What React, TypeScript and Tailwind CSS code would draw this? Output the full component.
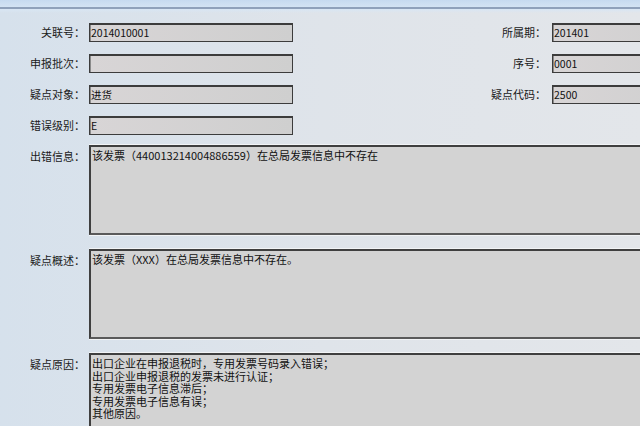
const font = "font-['SimSun','Noto_Sans_CJK_SC',sans-serif]"

function Label({ text, className = "" }: { text: string; className?: string }) {
  return (
    <div className={`w-[85px] shrink-0 text-right text-[11px] leading-[13px] text-[#1a1a1a] ${className}`}>
      {text}：
    </div>
  )
}

function Field({ value, className = "" }: { value?: string; className?: string }) {
  return (
    <div
      className={`h-[19px] border border-[#3c3c3c] border-t-2 bg-gradient-to-r from-[#d8d5d6] to-[#cfcfcf] pl-[1px] text-[10.5px] leading-[15px] text-[#111] shadow-[inset_1px_0_0_#8a8a8a] ${className}`}
    >
      {value}
    </div>
  )
}

function Area({ lines }: { lines: string[] }) {
  return (
    <div className="ml-[4px] h-[90px] flex-1 border-t-2 border-b-2 border-l-2 border-t-[#3f3f3f] border-b-[#5a5a5a] border-l-[#3f3f3f] bg-[#d3d3d3] px-[1px] pt-[2px] text-[11px] leading-[12.5px] text-[#111] shadow-[0_1px_0_#f2f4f6,0_-1px_0_#f2f4f6]">
      {lines.map((l, i) => (
        <div key={i}>{l}</div>
      ))}
    </div>
  )
}

export default function App() {
  const rows = [
    { l: "关联号", v: "2014010001", rl: "所属期", rv: "201401" },
    { l: "申报批次", v: "", rl: "序号", rv: "0001" },
    { l: "疑点对象", v: "进货", rl: "疑点代码", rv: "2500" },
    { l: "错误级别", v: "E" },
  ]

  return (
    <div className={`h-[426px] w-[640px] overflow-hidden bg-gradient-to-r from-[#d6e1ec] via-[#dfe4ea] to-[#e3e6ea] ${font}`}>
      <div className="h-[9px] bg-gradient-to-b from-[#c6daef] to-[#d3e3f3] border-b-2 border-[#8fa1ba]" />
      <div className="h-[4px] bg-gradient-to-b from-[#d8e6f4] to-transparent" />

      <div className="w-[700px] pt-[10px]">
        <div className="flex flex-col gap-[12px]">
          {rows.map((r) => (
            <div key={r.l} className="flex h-[19px] items-center">
              <Label text={r.l} />
              <Field value={r.v} className="ml-[4px] w-[204px]" />
              {r.rl && (
                <div className="ml-auto flex items-center">
                  <div className="mr-[6px] text-[11px] leading-[13px] text-[#1a1a1a]">{r.rl}：</div>
                  <Field value={r.rv} className="w-[148px]" />
                </div>
              )}
            </div>
          ))}
        </div>

        <div className="mt-[10px] flex flex-col gap-[14px]">
          <div className="flex items-start">
            <Label text="出错信息" className="pt-[5px]" />
            <Area lines={["该发票（440013214004886559）在总局发票信息中不存在"]} />
          </div>
          <div className="flex items-start">
            <Label text="疑点概述" className="pt-[5px]" />
            <Area lines={["该发票（XXX）在总局发票信息中不存在。"]} />
          </div>
          <div className="flex items-start">
            <Label text="疑点原因" className="pt-[5px]" />
            <Area
              lines={[
                "出口企业在申报退税时，专用发票号码录入错误；",
                "出口企业申报退税的发票未进行认证；",
                "专用发票电子信息滞后；",
                "专用发票电子信息有误；",
                "其他原因。",
              ]}
            />
          </div>
        </div>
      </div>
    </div>
  )
}
